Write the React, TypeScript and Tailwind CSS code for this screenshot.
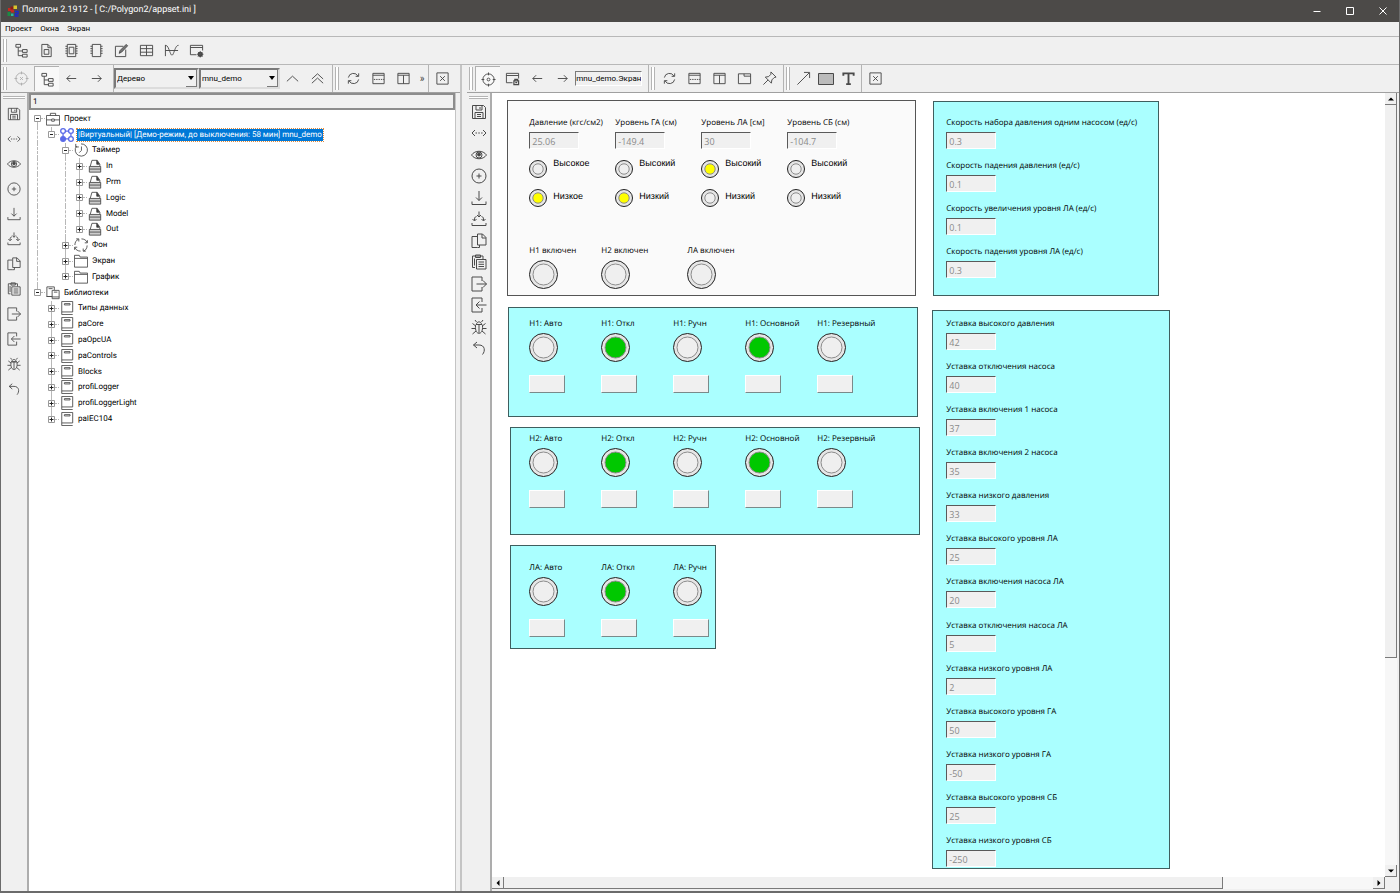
import type { ReactNode } from 'react'

const icons: Record<string, ReactNode> = {
  tree: <path d="M2 1.5h5v3H2zM4.5 4.5v9H9M4.5 8.5H9M9 7h5v3H9zM9 12h5v3H9z" />,
  page: <path d="M3 1.5h6.5L13 5v9.500H3zM9.500 1.500V5H13M5.500 7h5v5h-5z" />,
  chipInner: <path d="M3.500 1.500h9v13h-9zM5.500 4.500h5v7h-5zM1.500 3.500h2M1.500 6h2M1.500 8.500h2M1.500 11h2M12.500 3.500h2M12.500 6h2M12.500 8.500h2M12.500 11h2" />,
  chip: <path d="M3.500 1.500h9v13h-9zM1.500 3.500h2M1.500 6h2M1.500 8.500h2M1.500 11h2M12.500 3.500h2M12.500 6h2M12.500 8.500h2M12.500 11h2" />,
  edit: (
    <>
      <path d="M10 3.500H1.500v11h11V7" />
      <path d="M5.500 11l1-3 6.500-6.500 1.500 1.500L8 9.800z" fill="#777" />
    </>
  ),
  table: <path d="M1.500 2.500h13v11h-13zM1.500 6h13M1.500 9.800h13M8 2.500v11" />,
  curve: <path d="M1.500 2v12M1.500 8H15M1.500 3c2-1.500 3.500 3 5 7s2.500 4 4 0S13 2.500 15.500 2.500" />,
  windowGear: (
    <>
      <path d="M8 12.500H1.500v-10h13V8M1.500 4.800h13" />
      <circle cx="12" cy="12" r="1.800" strokeWidth="2" />
      <path d="M12 8.500v7M8.500 12h7M9.500 9.500l5 5M14.500 9.500l-5 5" strokeWidth=".8" />
    </>
  ),
  windowLock: (
    <>
      <path d="M8 12.500H1.500v-10h13V8M1.500 4.800h13" />
      <path d="M9.500 10.500h5v4h-5zM10.500 10.500V9h3v1.500M11 12.500h2" strokeWidth="1.300" />
    </>
  ),
  targetX: <path d="M14 8A6 6 0 1 1 2 8a6 6 0 0 1 12 0M8 .5v3M8 12.500v3M.5 8h3M12.500 8h3M6.500 6.500l3 3M9.500 6.500l-3 3" />,
  target: <path d="M14 8A6 6 0 1 1 2 8a6 6 0 0 1 12 0M8 .5v3M8 12.500v3M.5 8h3M12.500 8h3M9.500 8a1.500 1.500 0 1 1-3 0 1.500 1.500 0 0 1 3 0" />,
  left: <path d="M13 8H3M6.500 4.500L3 8l3.500 3.500" />,
  right: <path d="M3 8h10M9.500 4.500L13 8l-3.500 3.500" />,
  up: <path d="M2 11l6-5.500 6 5.500" />,
  up2: <path d="M2 8.500L8 3l6 5.500M2 13l6-5.500 6 5.500" />,
  refresh: <path d="M2.500 7a5.500 5.500 0 0 1 10.300-1.500M13.500 9A5.500 5.500 0 0 1 3.200 10.500M13.500 2.500v3.200h-3.200M2.500 13.500v-3.200h3.200" />,
  splitH: (
    <>
      <path d="M2 2.500h12v11H2zM2 4.500h12" />
      <path d="M3 9h11" strokeDasharray="1.500 1" />
    </>
  ),
  splitV: <path d="M2 2.500h12v11H2zM2 4.500h12M8 4.500v9" />,
  tab: <path d="M1.500 3h13v10.500h-13zM7.500 3v2.500h7" />,
  pin: <path d="M9.500 1l5.500 5.500-2 .5-2.500 2.500-.5 3.500L3.500 6.500 7 6l2.500-2.500zM6.500 9.500L1.500 14.500" />,
  close: <path d="M2 2h12v12H2zM5.500 5.500l5 5M10.500 5.500l-5 5" />,
  line: <path d="M1.500 14.500L14 2M8.500 1.500H14.500V7.500" />,
  rect: <path d="M.5 2.500h15v11H.5z" fill="#bbb" />,
  text: <path d="M2.500 5V2.500h11V5M8 2.500V14M5.500 14h5" strokeWidth="2" />,
  save: <path d="M1.500 1.500h11l2 2v11h-13zM5 1.500V6h6V1.500M9 3v2M4 14.500V8.500h8v6M6 10.500h4M6 12.500h4" />,
  code: (
    <>
      <path d="M4 5L1 8l3 3M12 5l3 3-3 3" />
      <path d="M4.500 8h8" strokeDasharray="1.500 1.300" />
    </>
  ),
  eye: (
    <>
      <path d="M.5 8C4 3 12 3 15.500 8 12 13 4 13 .5 8z" />
      <circle cx="8" cy="8" r="3" />
      <circle cx="8" cy="7.500" r="1.500" fill="#444" />
    </>
  ),
  plus: <path d="M15 8A7 7 0 1 1 1 8a7 7 0 0 1 14 0M5.500 8h5M8 5.500v5" />,
  download: <path d="M8 1V10.500M5 7.500L8 10.500l3-3M1 11.500v3h14v-3" />,
  downloads: <path d="M8 .5V6M6 4l2 2 2-2M5.500 5.500C3.500 6 3.500 7 3.500 9.500M1.500 8l2 2 2-2M10.500 5.500c2 .5 2 1.500 2 4M10.500 8l2 2 2-2M1 12v2.500h14V12" />,
  copy: <path d="M6.500 14.500H1v-11h5M6.500 12V1h5L15 4.500V12zM11 1v4h4M8.500 12v2.500h-2" />,
  paste: <path d="M4 13.500H1.500V2H12v3M4.500 1h5v2.500h-5zM5.500 5.500h9.500v9.500H5.500zM7.500 8h5.500M7.500 10.300h5.500M7.500 12.500h5.500M3.500 4.500v7" />,
  exit: <path d="M11 5V1H1v14h10v-4M5.500 8H15.500M12 4.500L15.500 8 12 11.500" />,
  enter: <path d="M11 5V1H1v14h10v-4M5 8h10.500M8.500 4.500L5 8l3.500 3.500" />,
  bug: <path d="M5 5.500h6M8 5.500V14M5.500 5.500C5.500 2 10.500 2 10.500 5.500M4.500 6.500c-1 10.500 8 10.500 7 0L11 5.500H5zM4.500 9.500H.5M11.500 9.500h4M4.800 7L1.500 4.500M11.200 7l3.300-2.500M5 12l-3.500 3M11 12l3.500 3M5.500 3L4 1M10.500 3L12 1" />,
  undo: <path d="M6 2L2.500 5 6 8M2.500 5H8c6 0 6.500 6 3.500 9.500" />,
  briefcase: <path d="M.5 4h15v11H.5zM5 4V1.500h6V4M.5 9h6M9.500 9h6M6.500 8h3v2.500h-3z" />,
  nodes: (
    <g stroke="#5a6ae8" strokeWidth="1.500">
      <circle cx="3.500" cy="3.500" r="2.700" />
      <circle cx="12.500" cy="3.500" r="2.700" />
      <circle cx="12.500" cy="12.500" r="2.700" />
      <circle cx="3.500" cy="12.500" r="2.700" fill="#5a6ae8" />
      <path d="M6.500 3.500h3M6.500 12.500h3M3.500 6.500v3M12.500 6.500v3" />
    </g>
  ),
  timer: <path d="M3 3.500A7 7 0 1 0 8 1M2 1v3.500H5.500M8.500 4v4.500L6 11" />,
  stack: (
    <>
      <path d="M2.500 8.500l2-7h6L13.500 6v2.500" />
      <path d="M10 1.500V6h3z" fill="#333" />
      <path d="M1.500 8.500h13v6.500h-13z" fill="#ccc" />
      <path d="M1.500 11.500h13" />
    </>
  ),
  cycle: <path d="M1 8c0-3 1.500-5.500 4-6.500M2.500 1h3v3M8.500 1c3 0 5.500 1.500 6.500 4M15.300 2.500v3h-3M15 8.500c0 3-1.500 5.500-4 6.500M13.500 15h-3v-3M7.500 15c-3 0-5.500-1.500-6.500-4M.7 13.500v-3h3" />,
  folder: <path d="M.5 15V1.500h5.500l1 2h8.500V15zM.5 5h15" />,
  books: <path d="M7 12H1V1h8.500V4.500M3 3h4.500M.5 12H7M7 5h8v9.500H7zM9 7h4M7 12.500h8" />,
  book: <path d="M2 .5h12.500v12H2zM5 3h6.500v1.500H5zM2 12.500V15.500H14.500" />,
}

function Icon({ name, size = 'size-[15px]' }: { name: string; size?: string }) {
  return (
    <svg className={`${size} shrink-0`} viewBox="0 0 16 16" fill="none" stroke="#4a4a4a" aria-hidden="true">
      {icons[name]}
    </svg>
  )
}

function Tool({ name, label, pressed, dim }: { name: string; label: string; pressed?: boolean; dim?: boolean }) {
  return (
    <button
      type="button"
      aria-label={label}
      className={`flex h-[25px] w-[25px] shrink-0 items-center justify-center ${
        pressed ? 'border-t border-l border-[#b0b0b0] bg-[#f8f8f8]' : ''
      } ${dim ? 'opacity-40' : ''}`}
    >
      <Icon name={name} />
    </button>
  )
}

const Grip = () => <span className="h-[23px] w-1 shrink-0 border-x border-[#b4b4b4] bg-white" />
const Divider = () => <span className="w-px shrink-0 self-stretch bg-[#b4b4b4]" />

const sideTools = [
  ['save', 'Сохранить'],
  ['code', 'Код'],
  ['eye', 'Просмотр'],
  ['plus', 'Добавить'],
  ['download', 'Загрузить'],
  ['downloads', 'Загрузить все'],
  ['copy', 'Копировать'],
  ['paste', 'Вставить'],
  ['exit', 'Экспорт'],
  ['enter', 'Импорт'],
  ['bug', 'Отладка'],
  ['undo', 'Отменить'],
]

function SideBar({ className, list, icon }: { className: string; list: string; icon: string }) {
  return (
    <div className={`flex shrink-0 flex-col items-center border-r-2 border-[#adadad] pt-[3px] ${className}`}>
      <span className="h-[3px] w-[calc(100%-4px)] shrink-0 border-y border-[#b4b4b4] bg-white" />
      <div className={`flex flex-col ${list}`}>
        {sideTools.map(([name, label]) => (
          <button key={name} type="button" aria-label={label} className="flex flex-1 items-center justify-center">
            <Icon name={name} size={icon} />
          </button>
        ))}
      </div>
    </div>
  )
}

function Combo({ label, value, width }: { label: string; value: string; width: string }) {
  return (
    <span
      className={`grid h-[21px] shrink-0 items-center border-2 border-t-[#7a7a7a] border-r-[#dcdcdc] border-b-[#dcdcdc] border-l-[#7a7a7a] ${width}`}
    >
      <select aria-label={label} className="col-start-1 row-start-1 h-[17px] w-full appearance-none pl-px">
        <option>{value}</option>
      </select>
      <span className="pointer-events-none col-start-1 row-start-1 flex h-[17px] w-[11px] items-center justify-center justify-self-end border-r border-b border-[#7a7a7a] bg-[#f0f0f0]">
        <svg className="h-1 w-[6px]" viewBox="0 0 6 4" aria-hidden="true">
          <path d="M0 0h6L3 4z" />
        </svg>
      </span>
    </span>
  )
}

type TreeNode = { name: string; icon: string; selected?: boolean; children?: TreeNode[] }

const block = (name: string): TreeNode => ({ name, icon: 'stack' })
const lib = (name: string): TreeNode => ({ name, icon: 'book' })

const tree: TreeNode[] = [
  {
    name: 'Проект',
    icon: 'briefcase',
    children: [
      {
        name: '|Виртуальный| [Демо-режим, до выключения: 58 мин] mnu_demo',
        icon: 'nodes',
        selected: true,
        children: [
          { name: 'Таймер', icon: 'timer', children: ['In', 'Prm', 'Logic', 'Model', 'Out'].map(block) },
          { name: 'Фон', icon: 'cycle' },
          { name: 'Экран', icon: 'folder' },
          { name: 'График', icon: 'folder' },
        ],
      },
    ],
  },
  {
    name: 'Библиотеки',
    icon: 'books',
    children: ['Типы данных', 'paCore', 'paOpcUA', 'paControls', 'Blocks', 'profiLogger', 'profiLoggerLight', 'paIEC104'].map(lib),
  },
]

const dots = 'border-l border-dashed border-[#b8b8b8]'

// guides[i] says whether the ancestor at level i has more siblings below
function TreeRows({ nodes, guides = [] }: { nodes: TreeNode[]; guides?: boolean[] }) {
  return (
    <>
      {nodes.map((node, i) => {
        const last = i === nodes.length - 1
        const first = i === 0 && guides.length === 0
        return [
          <li key={node.name} className="flex flex-1 items-center whitespace-nowrap">
            {guides.map((on, g) => (
              <span key={g} className="flex w-[14px] shrink-0 justify-start self-stretch pl-[3px]">
                {on && <span className={dots} />}
              </span>
            ))}
            <span className="flex w-[7px] shrink-0 flex-col self-stretch">
              <span className={`ml-[3px] flex-1 ${first ? '' : dots}`} />
              <svg className="size-[7px]" viewBox="0 0 7 7" fill="#fff" stroke="#9a9a9a" aria-hidden="true">
                <path d="M.5.5h6v6h-6z" />
                <path d={node.children ? 'M2 3.500h3' : 'M1.500 3.500h4M3.500 1.500v4'} stroke="#222" />
              </svg>
              <span className={`ml-[3px] flex-1 ${last ? '' : dots}`} />
            </span>
            <span className="mr-px h-px w-1 shrink-0 border-t border-dotted border-[#b8b8b8]" />
            <Icon name={node.icon} size="size-[14px]" />
            <span
              className={`ml-[3px] px-px leading-[12px] ${
                node.selected ? 'bg-[#0078d7] text-white outline-1 outline-dotted outline-[#e08a3c]' : ''
              }`}
            >
              {node.name}
            </span>
          </li>,
          node.children && <TreeRows key={`${node.name}-sub`} nodes={node.children} guides={[...guides, !last]} />,
        ]
      })}
    </>
  )
}

function Field({ id, label, value }: { id: string; label: string; value: string }) {
  return (
    <div className="flex flex-col items-start gap-[3px]">
      <label htmlFor={id} className="leading-[12px] whitespace-nowrap">
        {label}
      </label>
      <input
        id={id}
        disabled
        defaultValue={value}
        className="h-[17px] w-[50px] border border-t-[#5a5a5a] border-r-white border-b-white border-l-[#5a5a5a] bg-[#f0f0f0] px-[2px] pt-[2px] text-[9px] text-[#8a8a8a]"
      />
    </div>
  )
}

function Lamp({ color, small }: { color?: string; small?: boolean }) {
  const box = small ? 'size-[18px]' : 'size-[29px]'
  return (
    <svg className={`${box} shrink-0`} viewBox={small ? '0 0 18 18' : '0 0 29 29'} aria-hidden="true">
      {small ? (
        <>
          <circle cx="9" cy="9" r="8.500" fill="#e6e6e6" stroke="#222" />
          <circle cx="9" cy="9" r="5.200" fill={color ?? '#efefef'} stroke="#8c8c8c" />
        </>
      ) : (
        <>
          <circle cx="14.500" cy="14.500" r="14" fill="#e6e6e6" stroke="#222" />
          <circle cx="14.500" cy="14.500" r="10.500" fill={color ?? '#efefef'} stroke="#8c8c8c" />
        </>
      )}
    </svg>
  )
}

const yellow = '#ffff00'
const green = '#00c800'

const sensors = [
  { label: 'Давление (кгс/см2)', value: '25.06', names: ['Высокое', 'Низкое'], on: [false, true] },
  { label: 'Уровень ГА (см)', value: '-149.4', names: ['Высокий', 'Низкий'], on: [false, true] },
  { label: 'Уровень ЛА [см]', value: '30', names: ['Высокий', 'Низкий'], on: [true, false] },
  { label: 'Уровень СБ (см)', value: '-104.7', names: ['Высокий', 'Низкий'], on: [false, false] },
]

const rates = [
  ['Скорость набора давления одним насосом (ед/с)', '0.3'],
  ['Скорость падения давления (ед/с)', '0.1'],
  ['Скорость увеличения уровня ЛА (ед/с)', '0.1'],
  ['Скорость падения уровня ЛА (ед/с)', '0.3'],
]

const setpoints = [
  ['Уставка высокого давления', '42'],
  ['Уставка отключения насоса', '40'],
  ['Уставка включения 1 насоса', '37'],
  ['Уставка включения 2 насоса', '35'],
  ['Уставка низкого давления', '33'],
  ['Уставка высокого уровня ЛА', '25'],
  ['Уставка включения насоса ЛА', '20'],
  ['Уставка отключения насоса ЛА', '5'],
  ['Уставка низкого уровня ЛА', '2'],
  ['Уставка высокого уровня ГА', '50'],
  ['Уставка низкого уровня ГА', '-50'],
  ['Уставка высокого уровня СБ', '25'],
  ['Уставка низкого уровня СБ', '-250'],
]

function ModePanel({ unit, modes, className }: { unit: string; modes: string[]; className: string }) {
  return (
    <section className={`absolute flex border border-[#3f5f5f] bg-[#aaffff] ${className}`}>
      {modes.map((mode) => (
        <div key={mode} className="flex w-[72px] shrink-0 flex-col items-start">
          <span className="leading-[12px] whitespace-nowrap">{`${unit}: ${mode}`}</span>
          <div className="mt-[3px]">
            <Lamp color={mode === 'Откл' || mode === 'Основной' ? green : undefined} />
          </div>
          <button
            type="button"
            aria-label={`${unit}: ${mode}`}
            className="mt-[13px] h-[18px] w-9 border border-t-white border-r-[#7a8a8a] border-b-[#7a8a8a] border-l-white bg-[#f0f0f0]"
          />
        </div>
      ))}
    </section>
  )
}

function FieldPanel({ id, fields, className }: { id: string; fields: string[][]; className: string }) {
  return (
    <section className={`absolute flex flex-col border border-[#3f5f5f] bg-[#aaffff] ${className}`}>
      {fields.map(([label, value], i) => (
        <Field key={label} id={`${id}-${i}`} label={label} value={value} />
      ))}
    </section>
  )
}

function ArrowButton({ d, label }: { d: string; label: string }) {
  return (
    <button
      type="button"
      aria-label={label}
      className="flex size-3 shrink-0 items-center justify-center border-r border-b border-[#7a7a7a] bg-[#f0f0f0]"
    >
      <svg className="size-[6px]" viewBox="0 0 6 6" aria-hidden="true">
        <path d={d} />
      </svg>
    </button>
  )
}

function Canvas() {
  const modes = ['Авто', 'Откл', 'Ручн', 'Основной', 'Резервный']
  return (
    <div className="relative min-w-0 flex-1 overflow-hidden bg-white font-['Open_Sans','Noto_Sans',sans-serif]">
      <section className="absolute top-[7px] left-[15px] h-[196px] w-[409px] border border-[#555] bg-[#fafafa] pt-4 pl-[21px]">
        <div className="flex">
          {sensors.map((s, i) => (
            <div key={s.label} className="w-[86px] shrink-0">
              <Field id={`sensor-${i}`} label={s.label} value={s.value} />
              <div className="mt-2 flex gap-[6px]">
                <div className="flex flex-col gap-[11px] pt-[3px]">
                  {s.on.map((on, n) => (
                    <Lamp key={n} small color={on ? yellow : undefined} />
                  ))}
                </div>
                <div className="flex flex-col gap-[21px] font-['Liberation_Sans',sans-serif] text-[9px] leading-[12px]">
                  {s.names.map((name) => (
                    <span key={name}>{name}</span>
                  ))}
                </div>
              </div>
            </div>
          ))}
        </div>
        <div className="mt-[38px] flex">
          {[
            ['Н1 включен', 'w-[72px]'],
            ['Н2 включен', 'w-[86px]'],
            ['ЛА включен', 'w-[86px]'],
          ].map(([label, width]) => (
            <div key={label} className={`flex flex-col gap-[3px] ${width}`}>
              <span className="leading-[12px] whitespace-nowrap">{label}</span>
              <Lamp />
            </div>
          ))}
        </div>
      </section>
      <ModePanel unit="Н1" modes={modes} className="top-[214px] left-4 h-[110px] w-[410px] pt-[10px] pl-5" />
      <ModePanel unit="Н2" modes={modes} className="top-[334px] left-[18px] h-[108px] w-[410px] pt-[5px] pl-[18px]" />
      <ModePanel unit="ЛА" modes={modes.slice(0, 3)} className="top-[452px] left-[18px] h-[104px] w-[206px] pt-4 pl-[18px]" />
      <FieldPanel id="rate" fields={rates} className="top-2 left-[441px] h-[195px] w-[226px] gap-[11px] pt-[15px] pl-3" />
      <FieldPanel
        id="setpoint"
        fields={setpoints}
        className="top-[217px] left-[440px] h-[559px] w-[238px] justify-between pt-[7px] pb-px pl-[13px]"
      />
    </div>
  )
}

const track = 'bg-[#f7f7f7]'
const thumb = 'bg-[#f0f0f0] border-r border-b border-[#7a7a7a]'

export default function App() {
  return (
    <div className="flex h-screen flex-col overflow-hidden border-x border-b-2 border-[#6b6b6b] bg-[#f0f0f0] font-[Roboto,'Noto_Sans',sans-serif] text-[8px] text-black [text-rendering:geometricPrecision]">
      <header className="flex h-[22px] shrink-0 items-center bg-[#4c4a48] pl-[6px] text-white">
        <svg className="size-3" viewBox="0 0 12 12" aria-hidden="true">
          <path d="M1 3h3v3H1z" fill="#c8281e" />
          <path d="M3.500 1.500h3v3h-3z" fill="#8a1c14" />
          <path d="M6.500.5h3.500v3.500H6.500z" fill="#d8c62c" />
          <path d="M4 4.500h3v3H4z" fill="#c8281e" />
          <path d="M.5 7h3v4h-3z" fill="#1c8a44" />
          <path d="M4 8.500h2.500v2.500H4z" fill="#2bb6a0" />
          <path d="M8 6.500h3v2.200H8.500V11h3" fill="none" stroke="#1c28c8" strokeWidth="1.400" />
        </svg>
        <h1 className="ml-[3px] flex-1 text-[9px]">Полигон 2.1912 - [ C:/Polygon2/appset.ini ]</h1>
        {[
          ['Свернуть', 'M.5 4.500h7'],
          ['Развернуть', 'M.5.5h7v7h-7z'],
          ['Закрыть', 'M.5.5l7 7M7.500.5l-7 7'],
        ].map(([label, d]) => (
          <button key={label} type="button" aria-label={label} className="flex h-full w-[33px] items-center justify-center">
            <svg className="size-2" viewBox="0 0 8 8" fill="none" stroke="#fff" aria-hidden="true">
              <path d={d} />
            </svg>
          </button>
        ))}
      </header>

      <nav className="flex h-[15px] shrink-0 items-center gap-2 border-b border-[#b8b8b8] pl-1">
        {['Проект', 'Окна', 'Экран'].map((item) => (
          <button key={item} type="button">
            {item}
          </button>
        ))}
      </nav>

      <div className="flex h-7 shrink-0 items-center border-b border-[#b8b8b8] pl-[2px]">
        <Grip />
        <span className="w-[2px]" />
        <Tool name="tree" label="Дерево" />
        <Tool name="page" label="Страница" />
        <Tool name="chipInner" label="Модуль" />
        <Tool name="chip" label="Блок" />
        <Tool name="edit" label="Правка" />
        <Tool name="table" label="Таблица" />
        <Tool name="curve" label="График" />
        <Tool name="windowGear" label="Настройки окна" />
      </div>

      <div className="flex min-h-0 flex-1">
        <div className="flex w-[33%] min-w-[460px] shrink-0 flex-col border-r-2 border-[#c4c4c4]">
          <div className="flex h-7 shrink-0 items-center border-b border-[#a0a0a0] pl-[2px]">
            <Grip />
            <span className="w-[2px]" />
            <Tool name="targetX" label="Цель" dim />
            <Tool name="tree" label="Дерево проекта" pressed />
            <Tool name="left" label="Назад" />
            <Tool name="right" label="Вперёд" />
            <span className="w-1" />
            <Divider />
            <Combo label="Вид" value="Дерево" width="w-[85px]" />
            <Combo label="Модуль" value="mnu_demo" width="w-[81px]" />
            <Tool name="up" label="Вверх" />
            <Tool name="up2" label="В начало" />
            <span className="w-[2px]" />
            <Divider />
            <span className="w-[2px]" />
            <Grip />
            <span className="w-[2px]" />
            <Tool name="refresh" label="Обновить" />
            <Tool name="splitH" label="Разделить по горизонтали" />
            <Tool name="splitV" label="Разделить по вертикали" />
            <button type="button" className="w-3 text-[10px] text-[#444]">
              »
            </button>
            <Divider />
            <span className="w-px" />
            <Tool name="close" label="Закрыть панель" />
          </div>
          <div className="flex min-h-0 flex-1">
            <SideBar className="w-7" list="mt-[2px] h-[301px]" icon="size-[14px]" />
            <div className="mr-1 flex min-w-0 flex-1 flex-col border-r border-[#c4c4c4] bg-white">
              <div className="flex h-[17px] shrink-0 items-center border-2 border-[#8c8c8c] bg-[#f0f0f0] pl-[2px]">1</div>
              <ul className="mt-px ml-[5px] flex h-[316px] flex-col">
                <TreeRows nodes={tree} />
              </ul>
            </div>
          </div>
        </div>

        <div className="ml-[5px] flex min-w-0 flex-1 flex-col">
          <div className="flex h-7 shrink-0 items-center border-b border-[#a0a0a0] pl-[2px]">
            <Grip />
            <span className="w-[2px]" />
            <Tool name="target" label="Цель экрана" pressed />
            <Tool name="windowLock" label="Окно" />
            <Tool name="left" label="Назад по экранам" />
            <Tool name="right" label="Вперёд по экранам" />
            <input
              aria-label="Экран"
              defaultValue="mnu_demo.Экран"
              className="h-[15px] w-[67px] shrink-0 border border-t-[#7a7a7a] border-r-white border-b-white border-l-[#7a7a7a] bg-[#f0f0f0]"
            />
            <span className="w-[6px]" />
            <Divider />
            <span className="w-[2px]" />
            <Grip />
            <span className="w-[2px]" />
            <Tool name="refresh" label="Обновить экран" />
            <Tool name="splitH" label="Строки" />
            <Tool name="splitV" label="Столбцы" />
            <Tool name="tab" label="Вкладка" />
            <Tool name="pin" label="Закрепить" />
            <span className="w-px" />
            <Divider />
            <span className="w-[2px]" />
            <Grip />
            <span className="w-px" />
            <Tool name="line" label="Линия" />
            <button type="button" aria-label="Прямоугольник" className="flex w-5 justify-center">
              <Icon name="rect" size="size-4" />
            </button>
            <Tool name="text" label="Текст" />
            <Divider />
            <span className="w-px" />
            <Tool name="close" label="Закрыть экран" />
          </div>
          <div className="flex min-h-0 flex-1">
            <SideBar className="w-[25px]" list="mt-[2px] h-[258px]" icon="size-4" />
            <div className="mr-[2px] mb-[2px] flex min-w-0 flex-1 flex-col">
              <div className="flex min-h-0 flex-1">
                <Canvas />
                <div className={`flex w-3 shrink-0 flex-col ${track}`}>
                  <ArrowButton label="Прокрутить вверх" d="M0 4.500L3 1.500l3 3z" />
                  <div className={`flex-[553] ${thumb}`} />
                  <div className="flex-[207]" />
                  <ArrowButton label="Прокрутить вниз" d="M0 1.500h6l-3 3z" />
                </div>
              </div>
              <div className={`flex h-3 shrink-0 ${track}`}>
                <ArrowButton label="Прокрутить влево" d="M4.500 0v6l-3-3z" />
                <div className={`flex-[718] ${thumb}`} />
                <div className="flex-[150]" />
                <ArrowButton label="Прокрутить вправо" d="M1.500 0v6l3-3z" />
                <span className="w-3 bg-[#f0f0f0]" />
              </div>
            </div>
          </div>
        </div>
      </div>
    </div>
  )
}
